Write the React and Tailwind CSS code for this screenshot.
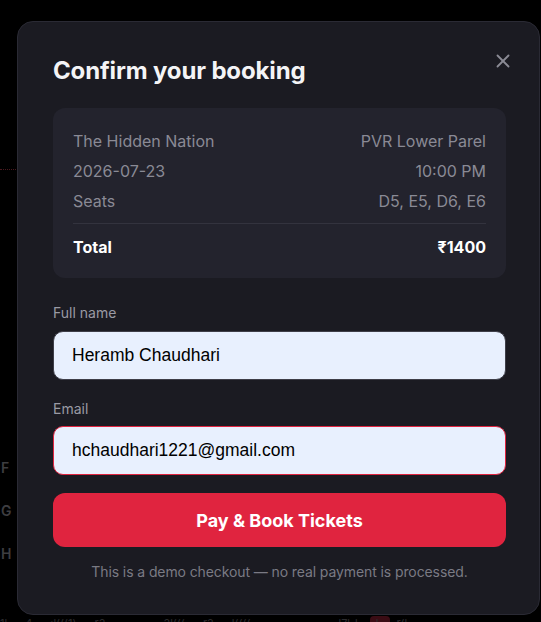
import { X } from "lucide-react";

function Row({ left, right }) {
  return (
    <div className="flex items-center justify-between text-[16px] leading-6 text-[#8a8a95]">
      <span>{left}</span>
      <span>{right}</span>
    </div>
  );
}

export default function App() {
  return (
    <div className="relative h-[622px] w-[541px] overflow-hidden bg-black font-['Inter',sans-serif]">
      {/* dimmed page behind the dialog */}
      <div className="absolute left-0 top-[169px] h-[2px] w-[16px] border-t border-dotted border-[#4a1a1f]" />
      <div className="absolute left-[1px] top-[458px] flex flex-col gap-[23px] text-[14px] font-semibold leading-5 text-[#3d3d40]">
        <span>F</span>
        <span>G</span>
        <span>H</span>
      </div>
      <div className="absolute left-[370px] top-[616px] h-[10px] w-[20px] rounded-t-sm bg-[#3a0c14]" />
      <div className="absolute left-0 top-[615px] flex w-[541px] gap-[18px] whitespace-nowrap text-[11px] leading-4 text-[#2c2c2f]">
        <span>1l</span>
        <span>4</span>
        <span>:l(((1)</span>
        <span>r2</span>
        <span className="ml-[40px]">2l(((</span>
        <span>r2</span>
        <span>l((((</span>
        <span className="ml-[70px]">l7l-l</span>
        <span>l</span>
        <span>r(l</span>
      </div>

      <div className="relative pl-[17px] pt-[21px]">
        <div className="relative w-[523px] rounded-2xl border border-[#2a2a34] bg-[#1b1b22] pb-[32px] pl-[35px] pr-[33px] pt-[33px]">
          <button className="absolute right-[24px] top-[27px] flex h-[24px] w-[24px] items-center justify-center text-[#8b8b95]">
            <X size={22} strokeWidth={2} />
          </button>

          <h2 className="text-[24px] font-bold leading-8 tracking-[-0.15px] text-[#f4f4f6]">Confirm your booking</h2>

          <div className="mt-[21px] rounded-xl bg-[#23232d] px-5 pb-[19px] pt-[21px]">
            <div className="flex flex-col gap-1.5">
              <Row left="The Hidden Nation" right="PVR Lower Parel" />
              <Row left="2026-07-23" right="10:00 PM" />
              <Row left="Seats" right="D5, E5, D6, E6" />
            </div>
            <div className="mt-[10px] flex items-center justify-between border-t border-[#33333e] pt-[11px] text-[16px] font-bold leading-6 text-white">
              <span>Total</span>
              <span>₹1400</span>
            </div>
          </div>

          <label className="mt-[25px] mb-2 block text-[14px] leading-5 text-[#9a9aa4]">Full name</label>
          <input
            readOnly
            value="Heramb Chaudhari"
            className="block h-[49px] w-full rounded-[10px] border border-[#3e3e48] bg-[#e8f0fe] px-[18px] font-['Liberation_Sans',Arial,sans-serif] text-[17.5px] text-black outline-none"
          />

          <label className="mt-[19px] mb-[7px] block text-[14px] leading-5 text-[#9a9aa4]">Email</label>
          <input
            readOnly
            value="hchaudhari1221@gmail.com"
            className="block h-[49px] w-full rounded-[10px] border border-[#e0243f] bg-[#e8f0fe] px-[18px] font-['Liberation_Sans',Arial,sans-serif] text-[17.5px] text-black outline-none"
          />

          <button className="mt-[18px] flex h-[54px] w-full items-center justify-center rounded-xl bg-[#e0243f] text-[18px] font-bold text-white">
            Pay &amp; Book Tickets
          </button>

          <p className="mt-[15px] text-center text-[14px] leading-5 tracking-[-0.1px] text-[#7a7a84]">
            This is a demo checkout — no real payment is processed.
          </p>
        </div>
      </div>
    </div>
  );
}
